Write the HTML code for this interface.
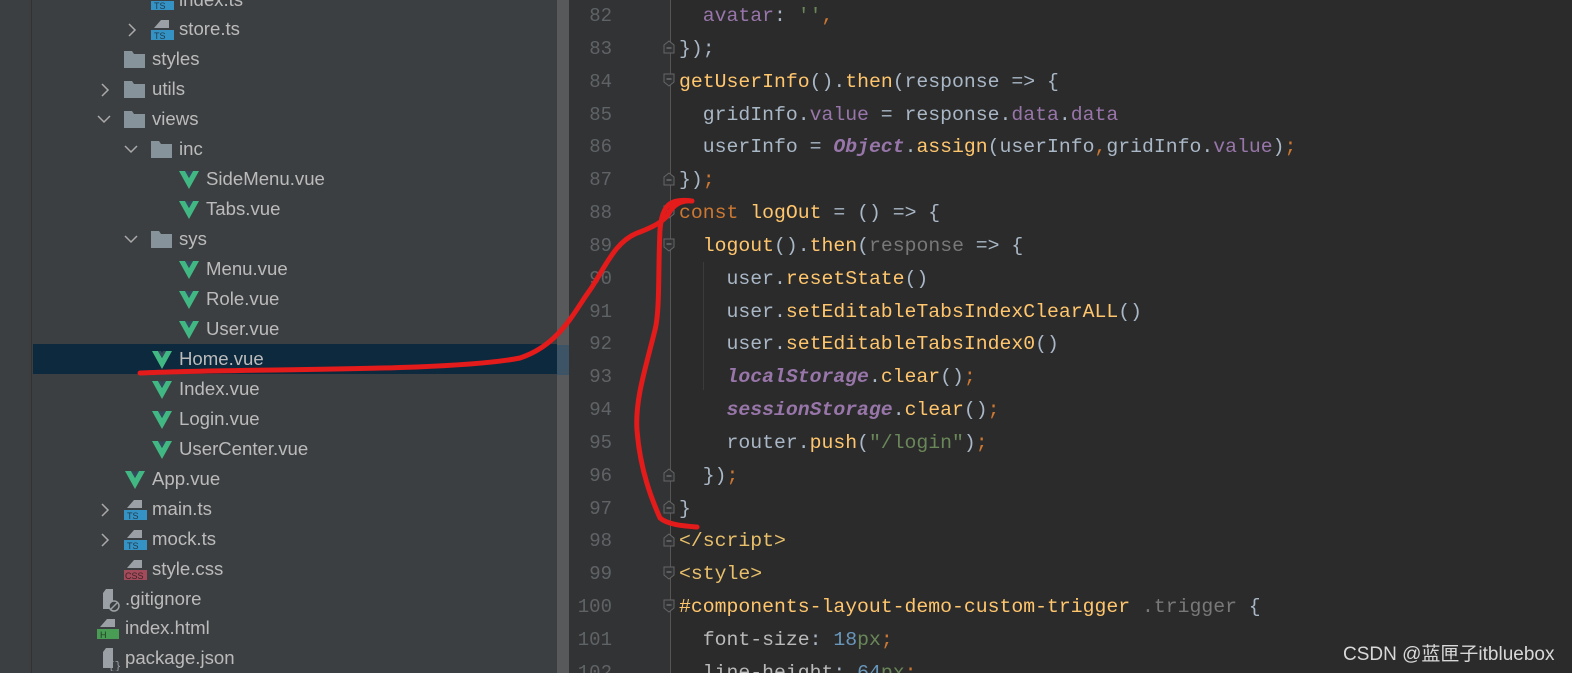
<!DOCTYPE html>
<html style="overflow:hidden;width:1572px;height:673px"><head><meta charset="utf-8"><style>
*{margin:0;padding:0;box-sizing:border-box}
html,body{overflow:hidden}
body{width:1572px;height:673px;overflow:hidden;background:#2b2b2b;position:relative;font-family:"Liberation Sans",sans-serif}
#tree{position:absolute;left:0;top:0;width:557px;height:673px;background:#3c3f41}
#tree .strip{position:absolute;left:0;top:0;width:32px;height:673px;background:#3c3f41;border-right:1px solid #323232}
.row{position:absolute;left:33px;width:524px;height:30px}
.row .t{position:absolute;top:0;line-height:30px;font-size:18.6px;color:#bbbbbb;white-space:nowrap}
.row svg{position:absolute}
.sel{background:#0d293e}
#sb{position:absolute;left:557px;top:0;width:12px;height:673px;background:#58595b}
#sbsel{position:absolute;left:557px;top:345px;width:12px;height:30px;background:#3d5466}
#gut{position:absolute;left:569px;top:0;width:101px;height:673px;background:#313335}
#foldline{position:absolute;left:670px;top:0;width:1px;height:673px;background:#555}
.ln{position:absolute;left:569px;width:43px;text-align:right;font-family:"Liberation Mono",monospace;font-size:19px;color:#606366;line-height:32px}
.cl{position:absolute;left:679px;font-family:"Liberation Mono",monospace;font-size:19.8px;color:#a9b7c6;line-height:32px;white-space:pre}
.o{color:#cc7832}.y{color:#ffc66d}.p{color:#9876aa}.g{color:#6a8759}.n{color:#6897bb}.gr{color:#787878}.it{font-style:italic;font-weight:bold;color:#9876aa}.tg{color:#e8bf6a}
.fm{position:absolute;left:663px;width:12px;height:14px}
.ind{position:absolute;left:703px;width:1px;background:#3b3b3b}
#wm{position:absolute;left:1343px;top:639px;font-size:19px;color:#d8d8d8;font-family:"Liberation Sans","Noto Sans CJK SC",sans-serif}
</style></head><body>
<div id="tree"><div class="strip"></div>

<div class="row" style="top:-15px"><svg style="left:118px;top:8px" width="24" height="18"><rect x="0" y="8" width="23" height="9" fill="#3592c4"/><text x="3" y="16" font-size="9" fill="#1d3b4d" font-family="Liberation Sans">TS</text></svg><span class="t" style="left:146px">index.ts</span></div>

<div class="row" style="top:14px"><svg style="left:94px;top:9px" width="10" height="14"><path d="M2 1l6 6-6 6" stroke="#aaa" stroke-width="1.5" fill="none"/></svg><svg style="left:118px;top:5px" width="24" height="22"><path d="M10 1h8v8H3z" fill="#9aa0a5"/><rect x="0" y="11" width="23" height="10" fill="#3592c4"/><text x="3" y="20" font-size="9" fill="#1d3b4d" font-family="Liberation Sans">TS</text></svg><span class="t" style="left:146px">store.ts</span></div>

<div class="row" style="top:44px"><svg style="left:91px;top:7px" width="22" height="17"><path d="M0 0h8l2 3h11v14H0z" fill="#87939a"/></svg><span class="t" style="left:119px">styles</span></div>

<div class="row" style="top:74px"><svg style="left:67px;top:9px" width="10" height="14"><path d="M2 1l6 6-6 6" stroke="#aaa" stroke-width="1.5" fill="none"/></svg><svg style="left:91px;top:7px" width="22" height="17"><path d="M0 0h8l2 3h11v14H0z" fill="#87939a"/></svg><span class="t" style="left:119px">utils</span></div>

<div class="row" style="top:104px"><svg style="left:64px;top:10px" width="14" height="10"><path d="M1 2l6 6 6-6" stroke="#aaa" stroke-width="1.5" fill="none"/></svg><svg style="left:91px;top:7px" width="22" height="17"><path d="M0 0h8l2 3h11v14H0z" fill="#87939a"/></svg><span class="t" style="left:119px">views</span></div>

<div class="row" style="top:134px"><svg style="left:91px;top:10px" width="14" height="10"><path d="M1 2l6 6 6-6" stroke="#aaa" stroke-width="1.5" fill="none"/></svg><svg style="left:118px;top:7px" width="22" height="17"><path d="M0 0h8l2 3h11v14H0z" fill="#87939a"/></svg><span class="t" style="left:146px">inc</span></div>

<div class="row" style="top:164px"><svg style="left:146px;top:7px" width="20" height="18"><path d="M0 0h6l4 7 4-7h6L10 18z" fill="#41b883"/><path d="M6 0h3l1 2 1-2h3l-4 7z" fill="#35495e"/></svg><span class="t" style="left:173px">SideMenu.vue</span></div>
<div class="row" style="top:194px"><svg style="left:146px;top:7px" width="20" height="18"><path d="M0 0h6l4 7 4-7h6L10 18z" fill="#41b883"/><path d="M6 0h3l1 2 1-2h3l-4 7z" fill="#35495e"/></svg><span class="t" style="left:173px">Tabs.vue</span></div>

<div class="row" style="top:224px"><svg style="left:91px;top:10px" width="14" height="10"><path d="M1 2l6 6 6-6" stroke="#aaa" stroke-width="1.5" fill="none"/></svg><svg style="left:118px;top:7px" width="22" height="17"><path d="M0 0h8l2 3h11v14H0z" fill="#87939a"/></svg><span class="t" style="left:146px">sys</span></div>

<div class="row" style="top:254px"><svg style="left:146px;top:7px" width="20" height="18"><path d="M0 0h6l4 7 4-7h6L10 18z" fill="#41b883"/><path d="M6 0h3l1 2 1-2h3l-4 7z" fill="#35495e"/></svg><span class="t" style="left:173px">Menu.vue</span></div>
<div class="row" style="top:284px"><svg style="left:146px;top:7px" width="20" height="18"><path d="M0 0h6l4 7 4-7h6L10 18z" fill="#41b883"/><path d="M6 0h3l1 2 1-2h3l-4 7z" fill="#35495e"/></svg><span class="t" style="left:173px">Role.vue</span></div>
<div class="row" style="top:314px"><svg style="left:146px;top:7px" width="20" height="18"><path d="M0 0h6l4 7 4-7h6L10 18z" fill="#41b883"/><path d="M6 0h3l1 2 1-2h3l-4 7z" fill="#35495e"/></svg><span class="t" style="left:173px">User.vue</span></div>

<div class="row sel" style="top:344px"><svg style="left:119px;top:7px" width="20" height="18"><path d="M0 0h6l4 7 4-7h6L10 18z" fill="#41b883"/><path d="M6 0h3l1 2 1-2h3l-4 7z" fill="#35495e"/></svg><span class="t" style="left:146px">Home.vue</span></div>
<div class="row" style="top:374px"><svg style="left:119px;top:7px" width="20" height="18"><path d="M0 0h6l4 7 4-7h6L10 18z" fill="#41b883"/><path d="M6 0h3l1 2 1-2h3l-4 7z" fill="#35495e"/></svg><span class="t" style="left:146px">Index.vue</span></div>
<div class="row" style="top:404px"><svg style="left:119px;top:7px" width="20" height="18"><path d="M0 0h6l4 7 4-7h6L10 18z" fill="#41b883"/><path d="M6 0h3l1 2 1-2h3l-4 7z" fill="#35495e"/></svg><span class="t" style="left:146px">Login.vue</span></div>
<div class="row" style="top:434px"><svg style="left:119px;top:7px" width="20" height="18"><path d="M0 0h6l4 7 4-7h6L10 18z" fill="#41b883"/><path d="M6 0h3l1 2 1-2h3l-4 7z" fill="#35495e"/></svg><span class="t" style="left:146px">UserCenter.vue</span></div>
<div class="row" style="top:464px"><svg style="left:92px;top:7px" width="20" height="18"><path d="M0 0h6l4 7 4-7h6L10 18z" fill="#41b883"/><path d="M6 0h3l1 2 1-2h3l-4 7z" fill="#35495e"/></svg><span class="t" style="left:119px">App.vue</span></div>

<div class="row" style="top:494px"><svg style="left:67px;top:9px" width="10" height="14"><path d="M2 1l6 6-6 6" stroke="#aaa" stroke-width="1.5" fill="none"/></svg><svg style="left:91px;top:5px" width="24" height="22"><path d="M10 1h8v8H3z" fill="#9aa0a5"/><rect x="0" y="11" width="23" height="10" fill="#3592c4"/><text x="3" y="20" font-size="9" fill="#1d3b4d" font-family="Liberation Sans">TS</text></svg><span class="t" style="left:119px">main.ts</span></div>
<div class="row" style="top:524px"><svg style="left:67px;top:9px" width="10" height="14"><path d="M2 1l6 6-6 6" stroke="#aaa" stroke-width="1.5" fill="none"/></svg><svg style="left:91px;top:5px" width="24" height="22"><path d="M10 1h8v8H3z" fill="#9aa0a5"/><rect x="0" y="11" width="23" height="10" fill="#3592c4"/><text x="3" y="20" font-size="9" fill="#1d3b4d" font-family="Liberation Sans">TS</text></svg><span class="t" style="left:119px">mock.ts</span></div>
<div class="row" style="top:554px"><svg style="left:91px;top:5px" width="24" height="22"><path d="M10 1h8v8H3z" fill="#9aa0a5"/><rect x="0" y="11" width="23" height="10" fill="#a34b5a"/><text x="1" y="20" font-size="9" fill="#3b2328" font-family="Liberation Sans">CSS</text></svg><span class="t" style="left:119px">style.css</span></div>

<div class="row" style="top:584px"><svg style="left:67px;top:4px" width="20" height="24"><path d="M6 1h7v20H3V5z" fill="#9aa0a5"/><circle cx="14" cy="18" r="5" fill="#3c3f41" stroke="#9aa0a5" stroke-width="1.5"/><path d="M11 21l6-6" stroke="#9aa0a5" stroke-width="1.5"/></svg><span class="t" style="left:92px">.gitignore</span></div>
<div class="row" style="top:613px"><svg style="left:64px;top:5px" width="24" height="22"><path d="M10 1h8v8H3z" fill="#9aa0a5"/><rect x="0" y="11" width="22" height="10" fill="#499c54"/><text x="3" y="20" font-size="9" fill="#1f3a22" font-family="Liberation Sans">H</text></svg><span class="t" style="left:92px">index.html</span></div>
<div class="row" style="top:643px"><svg style="left:67px;top:4px" width="22" height="24"><path d="M6 1h7v20H3V5z" fill="#9aa0a5"/><text x="8" y="22" font-size="11" fill="#9aa0a5" font-family="Liberation Mono">{}</text></svg><span class="t" style="left:92px">package.json</span></div>
</div>

<div id="sb"></div><div id="sbsel"></div>
<div id="gut"></div>
<div id="foldline"></div>
<div class="ind" style="top:262px;height:128px"></div>

<div class="ln" style="top:0px">82</div>
<div class="ln" style="top:32.8px">83</div>
<div class="ln" style="top:65.7px">84</div>
<div class="ln" style="top:98.5px">85</div>
<div class="ln" style="top:131.4px">86</div>
<div class="ln" style="top:164.2px">87</div>
<div class="ln" style="top:197px">88</div>
<div class="ln" style="top:229.9px">89</div>
<div class="ln" style="top:262.7px">90</div>
<div class="ln" style="top:295.6px">91</div>
<div class="ln" style="top:328.4px">92</div>
<div class="ln" style="top:361.2px">93</div>
<div class="ln" style="top:394.1px">94</div>
<div class="ln" style="top:426.9px">95</div>
<div class="ln" style="top:459.8px">96</div>
<div class="ln" style="top:492.6px">97</div>
<div class="ln" style="top:525.4px">98</div>
<div class="ln" style="top:558.3px">99</div>
<div class="ln" style="top:591.1px">100</div>
<div class="ln" style="top:624px">101</div>
<div class="ln" style="top:656.8px">102</div>

<svg class="fm" style="top:40px" viewBox="0 0 12 14"><path d="M1 13V5l5-4 5 4v8z" fill="#313335" stroke="#666" stroke-width="1"/><path d="M3.5 8h5" stroke="#888"/></svg>
<svg class="fm" style="top:73px" viewBox="0 0 12 14"><path d="M1 1v8l5 4 5-4V1z" fill="#313335" stroke="#666" stroke-width="1"/><path d="M3.5 6h5" stroke="#888"/></svg>
<svg class="fm" style="top:172px" viewBox="0 0 12 14"><path d="M1 13V5l5-4 5 4v8z" fill="#313335" stroke="#666" stroke-width="1"/><path d="M3.5 8h5" stroke="#888"/></svg>
<svg class="fm" style="top:205px" viewBox="0 0 12 14"><path d="M1 1v8l5 4 5-4V1z" fill="#313335" stroke="#666" stroke-width="1"/><path d="M3.5 6h5" stroke="#888"/></svg>
<svg class="fm" style="top:238px" viewBox="0 0 12 14"><path d="M1 1v8l5 4 5-4V1z" fill="#313335" stroke="#666" stroke-width="1"/><path d="M3.5 6h5" stroke="#888"/></svg>
<svg class="fm" style="top:468px" viewBox="0 0 12 14"><path d="M1 13V5l5-4 5 4v8z" fill="#313335" stroke="#666" stroke-width="1"/><path d="M3.5 8h5" stroke="#888"/></svg>
<svg class="fm" style="top:500px" viewBox="0 0 12 14"><path d="M1 13V5l5-4 5 4v8z" fill="#313335" stroke="#666" stroke-width="1"/><path d="M3.5 8h5" stroke="#888"/></svg>
<svg class="fm" style="top:533px" viewBox="0 0 12 14"><path d="M1 13V5l5-4 5 4v8z" fill="#313335" stroke="#666" stroke-width="1"/><path d="M3.5 8h5" stroke="#888"/></svg>
<svg class="fm" style="top:566px" viewBox="0 0 12 14"><path d="M1 1v8l5 4 5-4V1z" fill="#313335" stroke="#666" stroke-width="1"/><path d="M3.5 6h5" stroke="#888"/></svg>
<svg class="fm" style="top:599px" viewBox="0 0 12 14"><path d="M1 1v8l5 4 5-4V1z" fill="#313335" stroke="#666" stroke-width="1"/><path d="M3.5 6h5" stroke="#888"/></svg>

<div class="cl" style="top:0px">  <span class="p">avatar</span>: <span class="g">''</span><span class="o">,</span></div>
<div class="cl" style="top:32.8px">});</div>
<div class="cl" style="top:65.7px"><span class="y">getUserInfo</span>().<span class="y">then</span>(response =&gt; {</div>
<div class="cl" style="top:98.5px">  gridInfo.<span class="p">value</span> = response.<span class="p">data</span>.<span class="p">data</span></div>
<div class="cl" style="top:131.4px">  userInfo = <span class="it">Object</span>.<span class="y">assign</span>(userInfo<span class="o">,</span>gridInfo.<span class="p">value</span>)<span class="o">;</span></div>
<div class="cl" style="top:164.2px">})<span class="o">;</span></div>
<div class="cl" style="top:197px"><span class="o">const</span> <span class="y">logOut</span> = () =&gt; {</div>
<div class="cl" style="top:229.9px">  <span class="y">logout</span>().<span class="y">then</span>(<span class="gr">response</span> =&gt; {</div>
<div class="cl" style="top:262.7px">    user.<span class="y">resetState</span>()</div>
<div class="cl" style="top:295.6px">    user.<span class="y">setEditableTabsIndexClearALL</span>()</div>
<div class="cl" style="top:328.4px">    user.<span class="y">setEditableTabsIndex0</span>()</div>
<div class="cl" style="top:361.2px">    <span class="it">localStorage</span>.<span class="y">clear</span>()<span class="o">;</span></div>
<div class="cl" style="top:394.1px">    <span class="it">sessionStorage</span>.<span class="y">clear</span>()<span class="o">;</span></div>
<div class="cl" style="top:426.9px">    router.<span class="y">push</span>(<span class="g">"/login"</span>)<span class="o">;</span></div>
<div class="cl" style="top:459.8px">  })<span class="o">;</span></div>
<div class="cl" style="top:492.6px">}</div>
<div class="cl" style="top:525.4px"><span class="tg">&lt;/script&gt;</span></div>
<div class="cl" style="top:558.3px"><span class="tg">&lt;style&gt;</span></div>
<div class="cl" style="top:591.1px"><span class="y">#components-layout-demo-custom-trigger</span> <span class="gr">.trigger</span> {</div>
<div class="cl" style="top:624px">  <span style="color:#bababa">font-size</span>: <span class="n">18</span><span class="g">px</span><span class="o">;</span></div>
<div class="cl" style="top:656.8px">  <span style="color:#bababa">line-height</span>: <span class="n">64</span><span class="g">px</span><span class="o">;</span></div>

<div id="wm">CSDN @蓝匣子itbluebox</div>

<svg style="position:absolute;left:0;top:0" width="1572" height="673"><path d="M140,373 C250,368 450,372 520,358 C560,345 575,310 590,290 C605,268 615,240 640,232 C655,226 662,222 668,215 C672,206 680,200 692,201 C670,198 662,205 660,230 C658,270 660,310 655,330 C645,370 635,400 637,430 C640,470 652,500 660,518 C668,525 685,526 697,527" fill="none" stroke="#e31b1b" stroke-width="5" stroke-linecap="round" stroke-linejoin="round"/></svg>
</body></html>
